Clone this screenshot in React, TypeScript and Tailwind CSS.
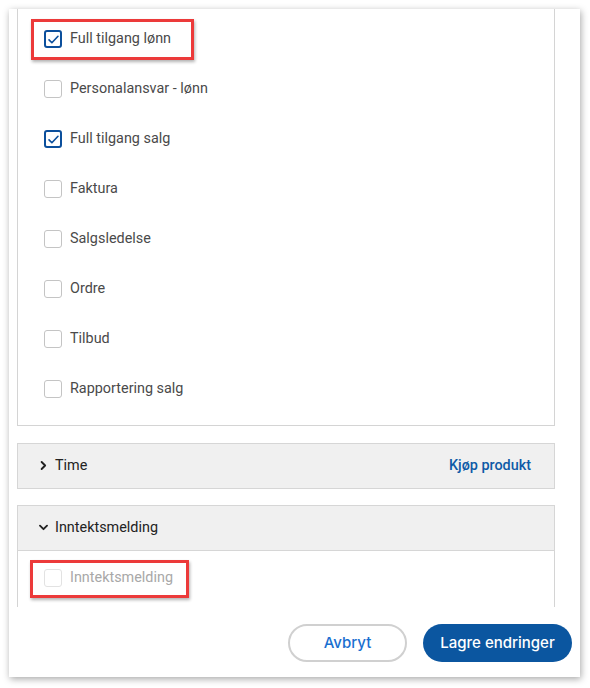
const rows = [
  { label: "Full tilgang lønn", checked: true },
  { label: "Personalansvar - lønn", checked: false },
  { label: "Full tilgang salg", checked: true },
  { label: "Faktura", checked: false },
  { label: "Salgsledelse", checked: false },
  { label: "Ordre", checked: false },
  { label: "Tilbud", checked: false },
  { label: "Rapportering salg", checked: false },
];

const Checkbox = ({ checked, disabled }: { checked?: boolean; disabled?: boolean }) => {
  if (checked) {
    return (
      <span className="w-[18px] h-[18px] rounded-[3px] border-2 border-[#0b4f9c] flex items-center justify-center bg-white">
        <svg viewBox="0 0 16 16" className="w-[13px] h-[13px]" fill="none" stroke="#0b4f9c" strokeWidth="2" strokeLinecap="round" strokeLinejoin="round">
          <path d="M2.5 8.5l3.5 3.5 7.5-8" />
        </svg>
      </span>
    );
  }
  return (
    <span
      className={
        disabled
          ? "w-[18px] h-[18px] rounded-[3px] border border-[#e2e2e2] bg-white"
          : "w-[18px] h-[18px] rounded-[3px] border border-[#c4c4c4] bg-white"
      }
    />
  );
};

const Chevron = ({ open }: { open?: boolean }) => (
  <svg viewBox="0 0 10 10" className="w-[11px] h-[11px]" fill="none" stroke="#222" strokeWidth="1.7" strokeLinecap="round" strokeLinejoin="round">
    {open ? <path d="M1.8 3.3l3.2 3.2 3.2-3.2" /> : <path d="M3.3 1.8l3.2 3.2-3.2 3.2" />}
  </svg>
);

const RedMark = ({ className }: { className: string }) => (
  <div className={"absolute border-[3px] border-[#ec3a3a] shadow-[1px_2px_3px_rgba(0,0,0,0.3)] pointer-events-none " + className} />
);

export default function App() {
  return (
    <div className="w-[590px] h-[688px] bg-white pt-[9px] pl-[9px]" style={{ fontFamily: "Roboto, 'Liberation Sans', sans-serif" }}>
      <div className="w-[571px] h-[668px] bg-white shadow-[1px_2px_7px_rgba(0,0,0,0.35)] flex flex-col">
        <div className="relative h-[598px] overflow-hidden pl-[8px] pr-[25px]">
          <div className="border-x border-b border-[#d4d4d4] pt-[5px] pb-[11px]">
            {rows.map((r) => (
              <div key={r.label} className="h-[50px] flex items-center gap-[8px] pl-[26px] text-[14.4px] text-[#4a4a4a]">
                <Checkbox checked={r.checked} />
                <span>{r.label}</span>
              </div>
            ))}
          </div>

          <div className="mt-[17px] h-[46px] bg-[#f0f0f0] border border-[#d6d6d6] flex items-center justify-between pl-[20px] pr-[23px]">
            <div className="flex items-center gap-[6px] text-[14.4px] text-[#222]">
              <Chevron />
              <span>Time</span>
            </div>
            <span className="text-[14.4px] font-medium text-[#0d5aa7]">Kjøp produkt</span>
          </div>

          <div className="mt-[16px] h-[46px] bg-[#f0f0f0] border border-[#d6d6d6] flex items-center pl-[20px]">
            <div className="flex items-center gap-[6px] text-[14.4px] text-[#222]">
              <Chevron open />
              <span>Inntektsmelding</span>
            </div>
          </div>
          <div className="border-x border-[#d4d4d4] h-[60px] pt-[8px]">
            <div className="h-[38px] flex items-center gap-[8px] pl-[26px] text-[14.4px] text-[#a8a8a8]">
              <Checkbox disabled />
              <span>Inntektsmelding</span>
            </div>
          </div>

          <RedMark className="left-[22px] top-[10px] w-[163px] h-[41px]" />
          <RedMark className="left-[21px] top-[551px] w-[159px] h-[38px]" />
        </div>

        <div className="flex justify-end items-center gap-[16px] pr-[8px] pt-[17px]" style={{ fontFamily: "Inter, 'Open Sans', sans-serif" }}>
          <button className="w-[119px] h-[38px] rounded-full border-2 border-[#d0d0d0] bg-white text-[15px] font-medium text-[#1a6fd0]">
            Avbryt
          </button>
          <button className="w-[149px] h-[38px] rounded-full bg-[#0b56a0] text-[15px] font-medium text-white">
            Lagre endringer
          </button>
        </div>
      </div>
    </div>
  );
}
